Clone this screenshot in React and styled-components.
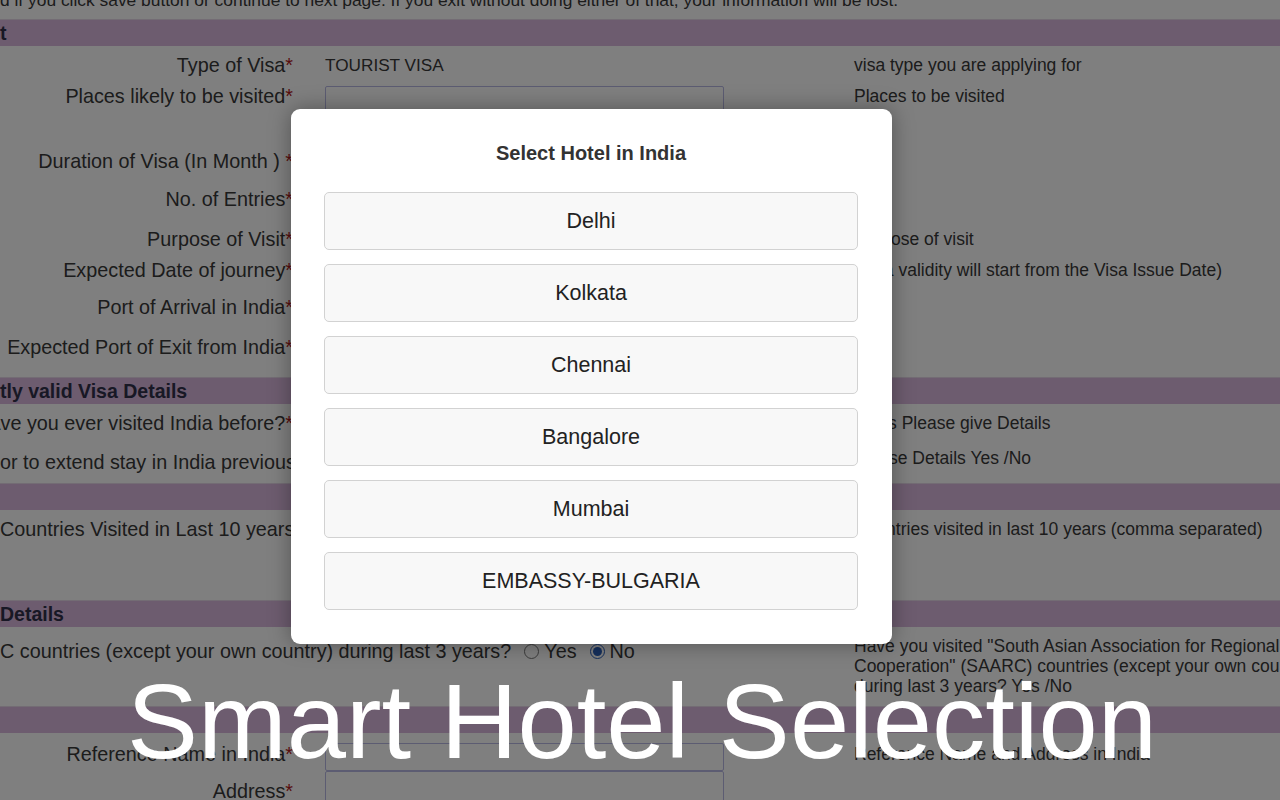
import React from 'react'
import styled, {createGlobalStyle} from 'styled-components'

const GlobalStyle = createGlobalStyle`
  html, body {
    margin: 0;
    padding: 0;
    overflow: hidden;
    background: #fff;
    font-family: "Liberation Sans", Arial, sans-serif;
  }
`

const Page = styled.div`
  position: relative;
  width: 1280px;
  height: 800px;
  overflow: hidden;
  background: #fff;
`

// page is scrolled a little, so the form starts above the viewport
const Form = styled.div`
  display: flex;
  flex-direction: column;
  margin-top: -10px;
  color: #383838;
`

const Notice = styled.div`
  height: 29px;
  font-size: 17.4px;
  line-height: 20px;
  white-space: nowrap;
`

const Bar = styled.div`
  height: 26px;
  border-top: 1px solid #e6d8e8;
  background: #dab8de;
  color: #30304a;
  font-weight: bold;
  font-size: 19.5px;
  line-height: 26px;
  white-space: nowrap;
`

const Row = styled.div`
  display: grid;
  grid-template-columns: 293px 497px 470px;
  column-gap: 32px;
  align-items: start;
  height: ${p => p.$h}px;
  padding-top: ${p => p.$pt}px;
  box-sizing: border-box;
`

// right aligned; long labels run off to the left like in the scrolled page
const LabelCell = styled.div`
  display: flex;
  justify-content: flex-end;
  font-size: 19.8px;
  line-height: 20px;
  white-space: pre;
  padding-top: ${p => p.$pt || 0}px;
`

const WideLabel = styled.div`
  grid-column: 1 / 3;
  display: flex;
  align-items: center;
  font-size: 19.8px;
  line-height: 20px;
  white-space: pre;
  padding-top: ${p => p.$pt || 0}px;
`

const Req = styled.span`
  color: #b01818;
`

const Label = ({children, $pt}) => (
    <LabelCell $pt={$pt}><span>{children}</span></LabelCell>
)

const Value = styled.div`
  font-size: 17.2px;
  line-height: 20px;
  text-transform: uppercase;
`

const Field = styled.div`
  width: 399px;
  height: ${p => p.$h || 28}px;
  margin-top: ${p => p.$mt || 0}px;
  box-sizing: border-box;
  border: 1px solid #b8b8e4;
  border-radius: 2px;
  background: #fff;
`

const Hint = styled.div`
  font-size: 17.5px;
  line-height: 20px;
  white-space: ${p => (p.$wrap ? 'normal' : 'nowrap')};
  padding-top: ${p => p.$pt || 0}px;
`

const Radio = styled.label`
  display: inline-flex;
  align-items: center;
  margin-left: 13px;

  input {
    margin: 0 5px 0 0;
    width: 15px;
    height: 15px;
    accent-color: #2b5fb8;
  }
`

const Overlay = styled.div`
  position: absolute;
  inset: 0;
  background: rgba(0, 0, 0, 0.5);
`

const Modal = styled.div`
  position: absolute;
  left: 291px;
  top: 109px;
  width: 601px;
  box-sizing: border-box;
  padding: 32px 34px 34px 33px;
  background: #fff;
  border-radius: 9px;
  box-shadow: 0 0 22px rgba(0, 0, 0, 0.35);
  display: flex;
  flex-direction: column;
  gap: 14px;
`

const ModalTitle = styled.div`
  font-weight: bold;
  font-size: 20px;
  line-height: 24px;
  color: #333;
  text-align: center;
  margin-bottom: 13px;
`

const CityButton = styled.button`
  height: 58px;
  border: 1px solid #d2d2d2;
  border-radius: 5px;
  background: #f8f8f8;
  color: #222;
  font-family: "Liberation Sans", Arial, sans-serif;
  font-size: 21.5px;
  cursor: pointer;
`

const Caption = styled.div`
  position: absolute;
  left: 0;
  right: 0;
  top: 669px;
  text-align: center;
  font-size: 106.5px;
  line-height: 106px;
  color: #fff;
  white-space: nowrap;
  padding-left: 4px;
`

const cities = ['Delhi', 'Kolkata', 'Chennai', 'Bangalore', 'Mumbai', 'EMBASSY-BULGARIA']

const App = () => {
    return (
        <Page>
            <GlobalStyle/>
            <Form>
                <Notice>d if you click save button or continue to next page. If you exit without doing either of that, your information will be lost.</Notice>
                <Bar>t</Bar>
                <Row $h={34} $pt={9}>
                    <Label>Type of Visa<Req>*</Req></Label>
                    <Value>Tourist Visa</Value>
                    <Hint>visa type you are applying for</Hint>
                </Row>
                <Row $h={66} $pt={6}>
                    <Label>Places likely to be visited<Req>*</Req></Label>
                    <Field $h={52}/>
                    <Hint>Places to be visited</Hint>
                </Row>
                <Row $h={34} $pt={5}>
                    <Label>Duration of Visa (In Month ) <Req>*</Req></Label>
                    <Field/>
                    <Hint/>
                </Row>
                <Row $h={38} $pt={9}>
                    <Label>No. of Entries<Req>*</Req></Label>
                    <Field/>
                    <Hint/>
                </Row>
                <Row $h={37} $pt={11}>
                    <Label>Purpose of Visit<Req>*</Req></Label>
                    <Field/>
                    <Hint>Purpose of visit</Hint>
                </Row>
                <Row $h={33} $pt={5}>
                    <Label>Expected Date of journey<Req>*</Req></Label>
                    <Field/>
                    <Hint>(Visa validity will start from the Visa Issue Date)</Hint>
                </Row>
                <Row $h={39} $pt={9}>
                    <Label>Port of Arrival in India<Req>*</Req></Label>
                    <Field/>
                    <Hint/>
                </Row>
                <Row $h={50} $pt={10}>
                    <Label>Expected Port of Exit from India<Req>*</Req></Label>
                    <Field/>
                    <Hint/>
                </Row>
                <Bar>tly valid Visa Details</Bar>
                <Row $h={36} $pt={9}>
                    <Label>Have you ever visited India before?<Req>*</Req></Label>
                    <Field/>
                    <Hint>If Yes Please give Details</Hint>
                </Row>
                <Row $h={43} $pt={8}>
                    <WideLabel $pt={4}>or to extend stay in India previously?<Req>*</Req></WideLabel>
                    <Hint>Please Details Yes /No</Hint>
                </Row>
                <Bar/>
                <Row $h={90} $pt={9}>
                    <WideLabel>Countries Visited in Last 10 years</WideLabel>
                    <Hint>Countries visited in last 10 years (comma separated)</Hint>
                </Row>
                <Bar> Details</Bar>
                <Row $h={79} $pt={9}>
                    <WideLabel $pt={5}>
                        C countries (except your own country) during last 3 years?
                        <Radio><input type="radio" name="saarc" readOnly/>Yes</Radio>
                        <Radio><input type="radio" name="saarc" defaultChecked/>No</Radio>
                    </WideLabel>
                    <Hint $wrap>Have you visited "South Asian Association for Regional Cooperation" (SAARC) countries (except your own country) during last 3 years? Yes /No</Hint>
                </Row>
                <Bar/>
                <Row $h={39} $pt={11}>
                    <Label>Reference Name in India<Req>*</Req></Label>
                    <Field $mt={-1}/>
                    <Hint>Reference Name and Address in India</Hint>
                </Row>
                <Row $h={60} $pt={1}>
                    <Label $pt={8}>Address<Req>*</Req></Label>
                    <Field $mt={-2} $h={40}/>
                    <Hint/>
                </Row>
            </Form>
            <Overlay/>
            <Modal>
                <ModalTitle>Select Hotel in India</ModalTitle>
                {cities.map(city => (
                    <CityButton key={city}>{city}</CityButton>
                ))}
            </Modal>
            <Caption>Smart Hotel Selection</Caption>
        </Page>
    )
}

export default App
